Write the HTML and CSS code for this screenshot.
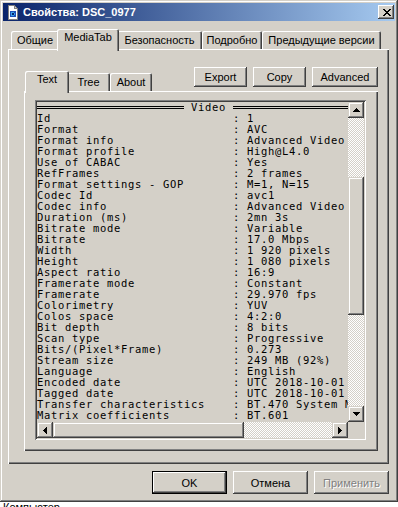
FILE: index.html
```html
<!DOCTYPE html>
<html lang="ru">

<head>
    <meta charset="UTF-8">
    <meta name="viewport" content="width=device-width, initial-scale=1.0">
    <title>Свойства: DSC_0977</title>
    <link rel="stylesheet" href="styles.css">
</head>

<body>

    <div class="window">
        <div class="titlebar">
            <svg class="title-icon" width="16" height="16" viewBox="0 0 16 16" shape-rendering="crispEdges">
                <path d="M4 1h6l3 3v11H4z" fill="#fff" stroke="#808080" stroke-width="1" transform="translate(-0.5 0.5)"/>
                <path d="M9.5 1.5v3h3" fill="#d4d0c8" stroke="#808080" stroke-width="1" transform="translate(-0.5 0)"/>
                <rect x="5" y="7" width="6" height="6" fill="#1b4fb8"/>
                <path d="M6 8h3v1h1v2H9v1H6z" fill="#3aa0e8"/>
                <rect x="7" y="9" width="2" height="2" fill="#0a246a"/>
            </svg>
            <span class="title-text">Свойства: DSC_0977</span>
            <div class="close-btn">
                <svg width="8" height="7" viewBox="0 0 8 7" shape-rendering="crispEdges">
                    <path d="M0 0h2v1H0zM6 0h2v1H6zM1 1h2v1H1zM5 1h2v1H5zM2 2h4v1H2zM3 3h2v1H3zM2 4h4v1H2zM1 5h2v1H1zM5 5h2v1H5zM0 6h2v1H0zM6 6h2v1H6z" fill="#000"/>
                </svg>
            </div>
        </div>

        <div class="tabs">
            <div class="tab tab-general">Общие</div>
            <div class="tab tab-media active">MediaTab</div>
            <div class="tab tab-security">Безопасность</div>
            <div class="tab tab-details">Подробно</div>
            <div class="tab tab-versions">Предыдущие версии</div>
        </div>

        <div class="panel">
            <div class="inner-head">
                <div class="inner-tabs">
                    <div class="tab tab-text active">Text</div>
                    <div class="tab tab-tree">Tree</div>
                    <div class="tab tab-about">About</div>
                </div>
                <div class="tools">
                    <div class="btn tool-small">Export</div>
                    <div class="btn tool-small">Copy</div>
                    <div class="btn tool-wide">Advanced</div>
                </div>
            </div>

            <div class="inner-panel">
                <div class="listbox">
                    <div class="list-text">
                        <div class="row head-row"><span class="rule rule-left"></span><span class="head-title">Video</span><span class="rule rule-right"></span></div>
                        <div class="row"><span class="key">Id</span>: 1</div>
                        <div class="row"><span class="key">Format</span>: AVC</div>
                        <div class="row"><span class="key">Format info</span>: Advanced Video Codec</div>
                        <div class="row"><span class="key">Format profile</span>: High@L4.0</div>
                        <div class="row"><span class="key">Use of CABAC</span>: Yes</div>
                        <div class="row"><span class="key">RefFrames</span>: 2 frames</div>
                        <div class="row"><span class="key">Format settings - GOP</span>: M=1, N=15</div>
                        <div class="row"><span class="key">Codec Id</span>: avc1</div>
                        <div class="row"><span class="key">Codec info</span>: Advanced Video Coding</div>
                        <div class="row"><span class="key">Duration (ms)</span>: 2mn 3s</div>
                        <div class="row"><span class="key">Bitrate mode</span>: Variable</div>
                        <div class="row"><span class="key">Bitrate</span>: 17.0 Mbps</div>
                        <div class="row"><span class="key">Width</span>: 1 920 pixels</div>
                        <div class="row"><span class="key">Height</span>: 1 080 pixels</div>
                        <div class="row"><span class="key">Aspect ratio</span>: 16:9</div>
                        <div class="row"><span class="key">Framerate mode</span>: Constant</div>
                        <div class="row"><span class="key">Framerate</span>: 29.970 fps</div>
                        <div class="row"><span class="key">Colorimetry</span>: YUV</div>
                        <div class="row"><span class="key">Colos space</span>: 4:2:0</div>
                        <div class="row"><span class="key">Bit depth</span>: 8 bits</div>
                        <div class="row"><span class="key">Scan type</span>: Progressive</div>
                        <div class="row"><span class="key">Bits/(Pixel*Frame)</span>: 0.273</div>
                        <div class="row"><span class="key">Stream size</span>: 249 MB (92%)</div>
                        <div class="row"><span class="key">Language</span>: English</div>
                        <div class="row"><span class="key">Encoded date</span>: UTC 2018-10-01 10:12:45</div>
                        <div class="row"><span class="key">Tagged date</span>: UTC 2018-10-01 10:12:45</div>
                        <div class="row"><span class="key">Transfer characteristics</span>: BT.470 System M</div>
                        <div class="row"><span class="key">Matrix coefficients</span>: BT.601</div>
                    </div>

                    <div class="vscroll">
                        <div class="sb-btn">
                            <svg width="7" height="4" viewBox="0 0 7 4" shape-rendering="crispEdges"><path d="M3 0h1v1h1v1h1v1h1v1H0V3h1V2h1V1h1z" fill="#000"/></svg>
                        </div>
                        <div class="track vtrack-top"></div>
                        <div class="thumb vthumb"></div>
                        <div class="track vtrack-bottom"></div>
                        <div class="sb-btn">
                            <svg width="7" height="4" viewBox="0 0 7 4" shape-rendering="crispEdges"><path d="M0 0h7v1H6v1H5v1H4v1H3V3H2V2H1V1H0z" fill="#000"/></svg>
                        </div>
                    </div>

                    <div class="hscroll">
                        <div class="sb-btn">
                            <svg width="4" height="7" viewBox="0 0 4 7" shape-rendering="crispEdges"><path d="M3 0h1v7H3V6H2V5H1V4H0V3h1V2h1V1h1z" fill="#000"/></svg>
                        </div>
                        <div class="thumb hthumb"></div>
                        <div class="track htrack"></div>
                        <div class="sb-btn">
                            <svg width="4" height="7" viewBox="0 0 4 7" shape-rendering="crispEdges"><path d="M0 0h1v1h1v1h1v1h1v1H3v1H2v1H1v1H0z" fill="#000"/></svg>
                        </div>
                    </div>

                    <div class="corner"></div>
                </div>
            </div>
        </div>

        <div class="footer">
            <div class="btn btn-default">OK</div>
            <div class="btn">Отмена</div>
            <div class="btn btn-disabled">Применить</div>
        </div>
    </div>

    <div class="below">Компьютер</div>

</body>

</html>
```

FILE: styles.css
```css
body {
    margin: 0;
    width: 398px;
    height: 507px;
    overflow: hidden;
    background-color: #fff;
    font-family: "Liberation Sans", Arial, sans-serif;
    font-size: 11px;
    color: #000;
}

.window {
    box-sizing: border-box;
    width: 398px;
    height: 502px;
    padding: 3px;
    display: flex;
    flex-direction: column;
    background-color: #d4d0c8;
    box-shadow: inset -1px -1px #404040, inset 1px 1px #d4d0c8, inset -2px -2px #808080, inset 2px 2px #fff;
}

/* title bar */

.titlebar {
    flex-shrink: 0;
    height: 18px;
    display: flex;
    align-items: center;
    padding: 0 1px 0 2px;
    background: linear-gradient(to right, #0a246a, #a6caf0);
    color: #fff;
    font-weight: bold;
}

.title-icon {
    display: block;
}

.title-text {
    margin-left: 2px;
    white-space: nowrap;
}

.close-btn {
    margin-left: auto;
    width: 16px;
    height: 14px;
    display: flex;
    align-items: center;
    justify-content: center;
    background-color: #d4d0c8;
    box-shadow: inset -1px -1px #404040, inset 1px 1px #fff, inset -2px -2px #808080;
}

.close-btn svg {
    display: block;
    margin-left: 1px;
}

/* tabs */

.tabs {
    flex-shrink: 0;
    display: flex;
    align-items: flex-end;
    height: 20px;
    margin-top: 8px;
    padding-left: 8px;
}

.tab {
    box-sizing: border-box;
    flex-shrink: 0;
    height: 18px;
    padding-top: 1px;
    line-height: 16px;
    text-align: center;
    white-space: nowrap;
    background-color: #d4d0c8;
    border-radius: 2px 2px 0 0;
    box-shadow: inset 1px 1px #fff, inset -1px 0 #404040, inset -2px 0 #808080;
}

.tab.active {
    position: relative;
    z-index: 1;
    height: 22px;
    padding-top: 0;
    margin: 0 -2px -2px;
}

.tab-general { width: 48px; }
.tab-media { width: 62px; }
.tab-security { width: 85px; }
.tab-details { width: 60px; }
.tab-versions { width: 119px; }

.tab-text { width: 44px; }
.tab-tree { width: 43px; }
.tab-about { width: 42px; }

.panel {
    box-sizing: border-box;
    flex-shrink: 0;
    width: 381px;
    height: 415px;
    margin-left: 5px;
    padding: 18px 11px 13px 16px;
    display: flex;
    flex-direction: column;
    box-shadow: inset 1px 1px #fff, inset -1px -1px #404040, inset -2px -2px #808080;
}

.inner-head {
    flex-shrink: 0;
    height: 24px;
    display: flex;
    justify-content: space-between;
}

.inner-tabs {
    display: flex;
    align-items: flex-end;
    padding-left: 3px;
}

.tools {
    display: flex;
    align-items: flex-start;
    gap: 6px;
}

/* buttons */

.btn {
    box-sizing: border-box;
    display: flex;
    align-items: center;
    justify-content: center;
    width: 75px;
    height: 23px;
    background-color: #d4d0c8;
    white-space: nowrap;
    box-shadow: inset -1px -1px #404040, inset 1px 1px #fff, inset -2px -2px #808080;
}

.tool-small {
    width: 53px;
    height: 20px;
}

.tool-wide {
    width: 66px;
    height: 20px;
}

.btn-default {
    border: 1px solid #000;
}

.btn-disabled {
    color: #808080;
    text-shadow: 1px 1px 0 #fff;
}

/* text view */

.inner-panel {
    flex: 1;
    box-sizing: border-box;
    padding: 9px 12px 11px 11px;
    box-shadow: inset 1px 1px #fff, inset -1px -1px #404040, inset -2px -2px #808080;
}

.listbox {
    box-sizing: border-box;
    width: 331px;
    height: 340px;
    padding: 2px;
    display: grid;
    grid-template-columns: 311px 16px;
    grid-template-rows: 320px 16px;
    box-shadow: inset 1px 1px #808080, inset -1px -1px #fff, inset 2px 2px #404040, inset -2px -2px #d4d0c8;
}

.list-text {
    overflow: hidden;
    font-family: "DejaVu Sans Mono", monospace;
    font-size: 10.5px;
    letter-spacing: 0.68px;
    line-height: 11px;
    white-space: nowrap;
}

.row {
    height: 11px;
    white-space: pre;
}

.key {
    display: inline-block;
    width: 196px;
}

.head-row {
    display: flex;
    align-items: center;
}

.rule {
    box-sizing: border-box;
    height: 3px;
    border-top: 1px solid #000;
    border-bottom: 1px solid #000;
}

.rule-left {
    width: 147px;
    flex-shrink: 0;
}

.head-title {
    margin: 0 7px;
}

.rule-right {
    flex: 1;
}

/* scrollbars */

.vscroll {
    display: flex;
    flex-direction: column;
}

.hscroll {
    display: flex;
}

.sb-btn {
    flex-shrink: 0;
    width: 16px;
    height: 16px;
    display: flex;
    align-items: center;
    justify-content: center;
    background-color: #d4d0c8;
    box-shadow: inset -1px -1px #404040, inset 1px 1px #d4d0c8, inset -2px -2px #808080, inset 2px 2px #fff;
}

.sb-btn svg {
    display: block;
}

.thumb {
    flex-shrink: 0;
    background-color: #d4d0c8;
    box-shadow: inset -1px -1px #404040, inset 1px 1px #d4d0c8, inset -2px -2px #808080, inset 2px 2px #fff;
}

.track {
    flex-shrink: 0;
    background: repeating-conic-gradient(#d4d0c8 0 25%, #fff 0 50%) 0 0 / 2px 2px;
}

.vtrack-top { height: 59px; }
.vthumb { height: 138px; }
.vtrack-bottom { height: 91px; }

.hthumb { width: 191px; }
.htrack { width: 88px; }

.corner {
    background-color: #d4d0c8;
}

/* bottom buttons */

.footer {
    flex-shrink: 0;
    display: flex;
    justify-content: flex-end;
    gap: 6px;
    height: 23px;
    margin-top: 7px;
    padding-right: 6px;
}

.below {
    height: 5px;
    overflow: hidden;
    padding-left: 3px;
    line-height: 11px;
}
```
